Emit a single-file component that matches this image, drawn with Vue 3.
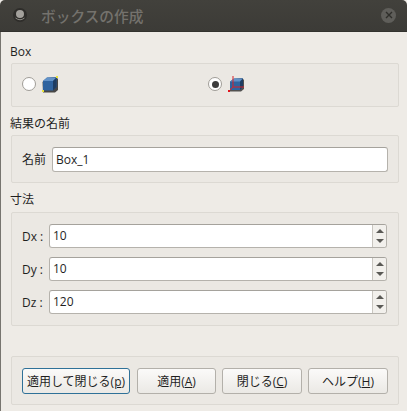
<script setup>
const dims = [
  { label: 'Dx :', value: '10' },
  { label: 'Dy :', value: '10' },
  { label: 'Dz :', value: '120' },
]
const buttons = [
  { text: '適用して閉じる(', key: 'p', cls: 'b1 focus' },
  { text: '適用(', key: 'A', cls: 'b2' },
  { text: '閉じる(', key: 'C', cls: 'b3' },
  { text: 'ヘルプ(', key: 'H', cls: 'b3' },
]
</script>

<template>
  <div class="window">
    <header class="titlebar">
      <svg class="app-icon" width="16" height="16" viewBox="0 0 16 16">
        <circle cx="8" cy="8" r="7" fill="#2e2d2a" />
        <circle cx="8" cy="7" r="4" fill="#a3a19c" />
        <path d="M3.5 11Q8 14.5 12.5 11" stroke="#8a8883" stroke-width="1" fill="none" />
      </svg>
      <span class="title">ボックスの作成</span>
      <span class="close">
        <svg width="8" height="8" viewBox="0 0 8 8"><path d="M1 1 7 7M7 1 1 7" stroke="#2f2e2a" stroke-width="1.4" fill="none" /></svg>
      </span>
    </header>
    <main class="body">
      <div class="label first">Box</div>
      <section class="group radios">
        <div class="radio-item one">
          <span class="radio"></span>
          <svg class="cube" width="16" height="17" viewBox="0 0 16 17">
            <path d="M1 16.5 13 16.5 16 14 16 3 14 1 5 2 0.5 6Z" fill="#111" opacity=".75" />
            <path d="M5 1.5 14.5 1.5 14.5 11 11 14.5 1 14.5 1 5Z" fill="#2f639f" />
            <path d="M5 1.5 14.5 1.5 11 5 1 5Z" fill="#6292c8" />
            <path d="M11 5 14.5 1.5 14.5 11 11 14.5Z" fill="#1e3d63" />
            <path d="M0 14 2 14 2 16 0 16ZM14 0 16 0 16 2 14 2Z" fill="#e8e23a" />
          </svg>
        </div>
        <div class="radio-item two">
          <span class="radio on"><span class="dot"></span></span>
          <svg class="cube" width="16" height="16" viewBox="0 0 16 16">
            <path d="M2 15.5 13 15.5 16 13 16 4 14 2 6 3 2 6Z" fill="#111" opacity=".7" />
            <path d="M6 2.5 15 2.5 15 11 12 14 2 14 2 5.5Z" fill="#2f639f" />
            <path d="M6 2.5 15 2.5 12 5.5 2 5.5Z" fill="#6292c8" />
            <path d="M12 5.5 15 2.5 15 11 12 14Z" fill="#1e3d63" />
            <path d="M5 0 5 11 1 15M5 11 16 11" stroke="#d8232a" stroke-width="1" fill="none" />
            <rect x="0" y="14" width="2" height="2" fill="#e0141c" />
          </svg>
        </div>
      </section>

      <div class="label">結果の名前</div>
      <section class="group name-group">
        <span class="name-label">名前</span>
        <div class="input name-input">Box_1</div>
      </section>

      <div class="label dims-label">寸法</div>
      <section class="group dims">
        <div v-for="d in dims" :key="d.label" class="dim-row">
          <span class="dim-label">{{ d.label }}</span>
          <div class="input spin">
            <span class="spin-value">{{ d.value }}</span>
            <span class="arrows">
              <i class="up"></i>
              <i class="down"></i>
            </span>
          </div>
        </div>
      </section>

      <section class="group actions">
        <button v-for="b in buttons" :key="b.key" :class="['btn', b.cls]" type="button">{{ b.text }}<u>{{ b.key }}</u>)</button>
      </section>
    </main>
  </div>
</template>

<style>
html, body { margin: 0; background: #7d7b76; }
</style>

<style scoped>
.window {
  width: 407px;
  height: 411px;
  display: flex;
  flex-direction: column;
  font-family: "Open Sans", "Noto Sans CJK JP", sans-serif;
  font-size: 12px;
  color: #1f1f1f;
  overflow: hidden;
  background: #eeebe6;
}
.titlebar {
  height: 32px;
  flex: none;
  box-sizing: border-box;
  display: flex;
  align-items: center;
  padding: 0 11px 1px 12px;
  background: linear-gradient(#42413c, #3c3b37);
  border-bottom: 1px solid #33322e;
  border-radius: 5px 5px 0 0;
}
.app-icon { flex: none; }
.title {
  margin-left: 13px;
  font-size: 14.7px;
  font-weight: 500;
  color: #74726d;
  font-family: "Noto Sans CJK JP", sans-serif;
  flex: 1;
}
.close {
  width: 15px;
  height: 15px;
  border-radius: 50%;
  background: #5f5e5a;
  display: flex;
  align-items: center;
  justify-content: center;
}
.body {
  flex: 1;
  box-sizing: border-box;
  padding: 0 8px 0 9px;
  border-left: 1px solid #77756f;
  display: flex;
  flex-direction: column;
}
.label {
  height: 18px;
  line-height: 18px;
  margin-top: 8px;
  margin-bottom: 2px;
}
.label.first { margin-top: 11px; }
.label.dims-label { margin-bottom: 3px; }
.group {
  box-sizing: border-box;
  border: 1px solid #dcd9d3;
  border-radius: 2px;
  background: #ebe8e3;
  margin-left: 1px;
}
.radios {
  height: 44px;
  display: flex;
  align-items: center;
  padding: 0 0 2px 10px;
}
.radio-item { display: flex; align-items: center; }
.radio-item.one { width: 186px; gap: 6px; }
.radio-item.two { gap: 6px; }
.radio {
  width: 14px;
  height: 14px;
  box-sizing: border-box;
  border: 1px solid #a09d97;
  border-radius: 50%;
  background: #fff;
  display: flex;
  align-items: center;
  justify-content: center;
}
.dot { width: 7px; height: 7px; border-radius: 50%; background: #3c3c3c; }
.name-group {
  height: 48px;
  display: flex;
  align-items: center;
  padding: 0 10px;
}
.name-label { width: 30px; flex: none; }
.input {
  box-sizing: border-box;
  background: #fff;
  border: 1px solid #b5b2ac;
  border-top-color: #a5a29c;
  border-radius: 3px;
  height: 25px;
  line-height: 23px;
}
.name-input { flex: 1; padding-left: 3px; }
.dims {
  height: 114px;
  padding: 11px 11px 0 10px;
  display: flex;
  flex-direction: column;
  gap: 9px;
}
.dim-row { display: flex; align-items: center; height: 24px; }
.dim-label { width: 27px; flex: none; }
.spin {
  flex: 1;
  height: 24px;
  display: flex;
  padding-left: 3px;
  line-height: 22px;
}
.spin-value { flex: 1; }
.arrows {
  width: 14px;
  border-left: 1px solid #c9c6c0;
  background: #f2f0ec;
  border-radius: 0 2px 2px 0;
  display: flex;
  flex-direction: column;
  align-items: center;
  justify-content: center;
  gap: 6px;
  box-sizing: border-box;
}
.arrows i { width: 0; height: 0; border-left: 4px solid transparent; border-right: 4px solid transparent; }
.up { border-bottom: 4px solid #5a5955; }
.down { border-top: 4px solid #5a5955; }
.actions {
  height: 49px;
  margin-top: 30px;
  display: flex;
  align-items: center;
  padding-left: 10px;
  gap: 6px;
}
.btn {
  height: 26px;
  box-sizing: border-box;
  padding: 0;
  font: inherit;
  color: #1f1f1f;
  white-space: nowrap;
  border: 1px solid #b3b0aa;
  border-radius: 3px;
  background: linear-gradient(#fbfaf9, #ebe9e5);
}
.b1 { width: 108px; }
.b2 { width: 79px; margin-left: 1px; }
.b3 { width: 80px; }
.focus { border-color: #2f7198; }
</style>
